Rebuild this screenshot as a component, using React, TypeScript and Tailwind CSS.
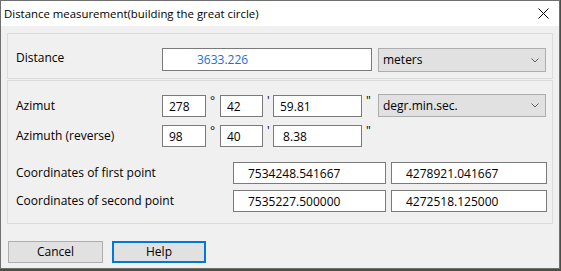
import React from "react";

const font = "font-['Segoe_UI','Open_Sans',sans-serif]";

function Field({ value, className, textClass = "pl-[6px]" }: { value: string; className: string; textClass?: string }) {
  return (
    <input
      readOnly
      value={value}
      className={`h-[22px] border border-[#7a7a7a] bg-white text-[12px] text-black outline-none ${textClass} ${className}`}
    />
  );
}

function Dropdown({ label, className }: { label: string; className?: string }) {
  return (
    <div
      className={`flex w-[168px] items-center justify-between border border-[#adadad] bg-[#e1e1e1] pl-[4px] pr-[6px] text-[12px] text-black ${className ?? ""}`}
    >
      <span>{label}</span>
      <svg width="8" height="5" viewBox="0 0 8 5" className="text-[#606060]">
        <path d="M0.5 0.5 L4 4 L7.5 0.5" fill="none" stroke="currentColor" strokeWidth="1" />
      </svg>
    </div>
  );
}

function Mark({ children, className }: { children: string; className: string }) {
  return <span className={`self-start text-[12px] leading-[12px] text-black ${className}`}>{children}</span>;
}

function AngleRow({ label, deg, min, sec, unit }: { label: string; deg: string; min: string; sec: string; unit?: boolean }) {
  return (
    <div className="flex h-[22px] items-center">
      <span className="w-[146px] text-[12px] text-black">{label}</span>
      <Field value={deg} className="w-[44px]" />
      <Mark className="w-[14px] pl-[4px]">°</Mark>
      <Field value={min} className="w-[43px]" />
      <Mark className="w-[10px] pl-[4px]">'</Mark>
      <Field value={sec} className="w-[89px]" />
      <Mark className="w-[16px] pl-[4px]">"</Mark>
      {unit ? <Dropdown label="degr.min.sec." className="h-[23px] -mt-px" /> : null}
    </div>
  );
}

function CoordRow({ label, x, y }: { label: string; x: string; y: string }) {
  return (
    <div className="flex h-[22px] items-center">
      <span className="w-[217px] text-[12px] text-black">{label}</span>
      <Field value={x} className="w-[153px]" textClass="pl-[14px]" />
      <Field value={y} className="ml-[5px] w-[156px]" textClass="pl-[14px]" />
    </div>
  );
}

export default function App() {
  return (
    <div className={`h-[271px] w-[561px] bg-[#4a4f45] ${font}`}>
      <div className="flex h-[269px] w-[560px] flex-col border border-[#6f6f6f] bg-[#f0f0f0]">
        <div className="flex h-[25px] items-center justify-between bg-white pl-[3px]">
          <span className="text-[11.4px] text-black">Distance measurement(building the great circle)</span>
          <svg width="46" height="25" viewBox="0 0 46 25">
            <path d="M25.5 7.5 L35.5 17.5 M35.5 7.5 L25.5 17.5" stroke="#000" strokeWidth="1" />
          </svg>
        </div>

        <div className="flex flex-col px-[6px] pt-[7px]">
          <div className="flex border border-[#dcdcdc] pl-[8px] pt-[14px] pb-[6px]">
            <span className="mt-[1px] w-[146px] self-start text-[12px] text-black">Distance</span>
            <Field value="3633.226" className="h-[23px] w-[210px] !text-[#1a6fdc]" textClass="pl-[34px]" />
            <Dropdown label="meters" className="ml-[6px] h-[24px]" />
          </div>

          <div className="mt-px flex flex-col border border-[#dcdcdc] pl-[8px] pt-[14px] pb-[11px]">
            <AngleRow label="Azimut" deg="278" min="42" sec="59.81" unit />
            <div className="mt-[8px]">
              <AngleRow label="Azimuth (reverse)" deg="98" min="40" sec=" 8.38" />
            </div>
            <div className="mt-[15px] flex flex-col gap-[6px]">
              <CoordRow label="Coordinates of first point" x="7534248.541667" y="4278921.041667" />
              <CoordRow label="Coordinates of second point" x="7535227.500000" y="4272518.125000" />
            </div>
          </div>

          <div className="ml-px mt-[17px] flex gap-[9px]">
            <button className="h-[22px] w-[95px] border border-[#adadad] bg-[#e1e1e1] text-[12px] text-black">Cancel</button>
            <button className="h-[22px] w-[94px] border-2 border-[#0078d7] bg-[#e1e1e1] text-[12px] text-black">Help</button>
          </div>
        </div>
      </div>
    </div>
  );
}
